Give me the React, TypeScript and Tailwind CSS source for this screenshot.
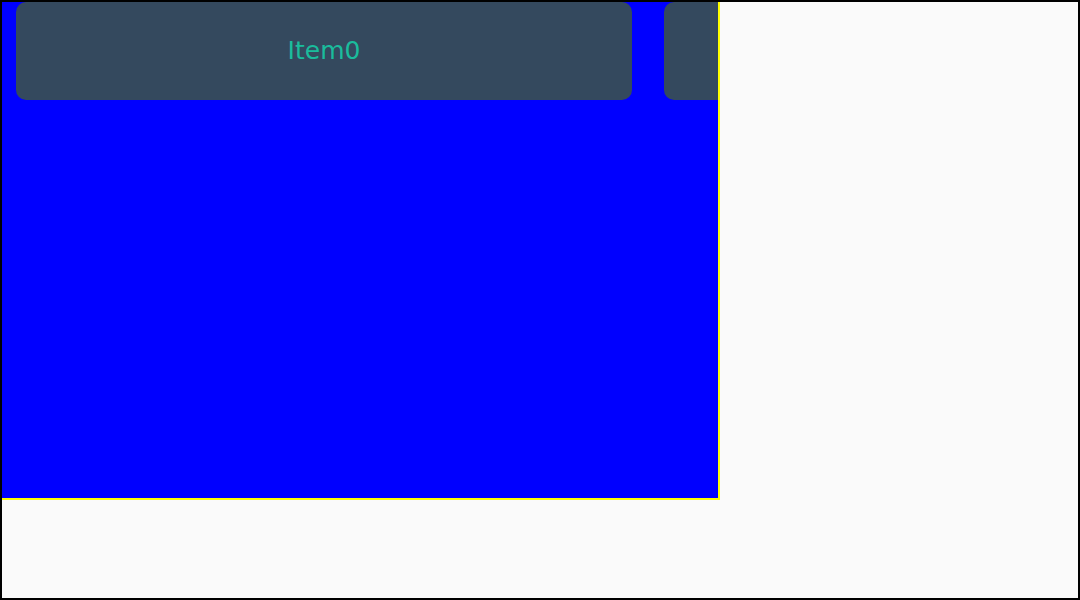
export default function App() {
  const items = ["Item0", "Item1"];

  return (
    <div className="relative w-[1080px] h-[600px] bg-[#fafafa] overflow-hidden">
      <div className="w-[720px] h-[500px] bg-[#0000ff] border-2 border-[#ffff00] overflow-hidden flex gap-8 pl-[14px]">
        {items.map((item) => (
          <div
            key={item}
            className="w-[616px] h-[98px] shrink-0 rounded-[10px] bg-[#34495e] flex items-center justify-center text-[#1abc9c] text-[25px]"
            style={{ fontFamily: '"DejaVu Sans", sans-serif' }}
          >
            {item}
          </div>
        ))}
      </div>
      {/* page frame */}
      <div className="pointer-events-none absolute inset-0 border-2 border-black" />
    </div>
  );
}
